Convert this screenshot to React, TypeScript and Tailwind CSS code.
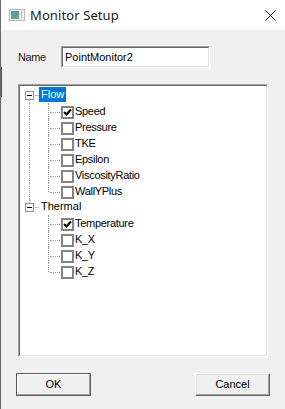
import React from "react";

type Item = { label: string; checked?: boolean };
const groups: { name: string; selected?: boolean; items: Item[] }[] = [
  {
    name: "Flow",
    selected: true,
    items: [
      { label: "Speed", checked: true },
      { label: "Pressure" },
      { label: "TKE" },
      { label: "Epsilon" },
      { label: "ViscosityRatio" },
      { label: "WallYPlus" },
    ],
  },
  {
    name: "Thermal",
    items: [
      { label: "Temperature", checked: true },
      { label: "K_X" },
      { label: "K_Y" },
      { label: "K_Z" },
    ],
  },
];

function CheckBox({ checked }: { checked?: boolean }) {
  return (
    <div className="absolute left-[41px] top-[3px] w-[13px] h-[13px] border-2 border-[#838383] bg-white flex items-center justify-center">
      {checked && (
        <svg width="9" height="9" viewBox="0 0 9 9">
          <path d="M1 4 L3.5 6.5 L8 1.5" stroke="#000" strokeWidth="2" fill="none" />
        </svg>
      )}
    </div>
  );
}

function TitleIcon() {
  return (
    <svg width="16" height="12" viewBox="0 0 16 12">
      <defs>
        <linearGradient id="g" x1="0" y1="0" x2="0" y2="1">
          <stop offset="0" stopColor="#5a8fb8" />
          <stop offset="1" stopColor="#5fae80" />
        </linearGradient>
      </defs>
      <rect x="0.5" y="0.5" width="15" height="11" fill="#f4f4f4" stroke="#b9b9b9" />
      <rect x="2" y="2" width="8" height="8" fill="url(#g)" />
      <rect x="10" y="2" width="4" height="8" fill="#e9e9e9" />
      <rect x="12" y="2" width="1" height="8" fill="#c4c4c4" />
    </svg>
  );
}

export default function App() {
  return (
    <div className="relative w-[285px] h-[409px] bg-[#f0f0f0] border-l border-[#6b6b6b] flex flex-col overflow-hidden font-['Liberation_Sans',Arial,sans-serif] text-[11px] text-black">
      <div className="absolute left-[-1px] top-[67px] w-[2px] h-[30px] bg-[#7d2f7f]" />
      {/* Title bar */}
      <div className="h-[30px] bg-white flex items-center pl-[8px] pr-[9px]">
        <TitleIcon />
        <span className="ml-[5px] text-[13px] text-[#1a1a1a] font-['Noto_Sans','Liberation_Sans',sans-serif] leading-none tracking-[0.1px]">
          Monitor Setup
        </span>
        <div className="flex-1" />
        <svg width="11" height="11" viewBox="0 0 11 11">
          <path d="M0.5 0.5 L10.5 10.5 M10.5 0.5 L0.5 10.5" stroke="#000" strokeWidth="1" />
        </svg>
      </div>

      {/* Name row */}
      <div className="mt-[16px] flex items-center pl-[17px]">
        <span className="w-[43px] text-[#1a1a1a] tracking-[-0.4px]">Name</span>
        <div className="w-[149px] h-[22px] border-t border-l border-[#a0a0a0] border-r-white border-b-white border-r border-b">
          <div className="w-full h-full border-t border-l border-t-[#696969] border-l-[#696969] border-r border-b border-r-[#e3e3e3] border-b-[#e3e3e3] bg-white pl-[2px] leading-[18px]">
            PointMonitor2
          </div>
        </div>
      </div>

      {/* Tree */}
      <div className="mt-[16px] ml-[17px] w-[250px] h-[273px] border-t border-l border-t-[#a0a0a0] border-l-[#a0a0a0] border-r border-b border-r-white border-b-white">
        <div className="w-full h-full bg-white border-t border-l border-t-[#696969] border-l-[#696969] border-r border-b border-r-[#e3e3e3] border-b-[#e3e3e3] pt-[1px]">
          {groups.map((g, gi) => {
            const lastGroup = gi === groups.length - 1;
            return (
              <div key={g.name}>
                <div className="relative h-[16px]">
                  {gi > 0 && (
                    <div className="absolute left-[9px] top-0 h-[4px] border-l border-dotted border-[#a0a0a0]" />
                  )}
                  {!lastGroup && (
                    <div className="absolute left-[9px] top-[13px] h-[3px] border-l border-dotted border-[#a0a0a0]" />
                  )}
                  <div className="absolute left-[5px] top-[4px] w-[9px] h-[9px] border border-[#919191] bg-white flex items-center justify-center">
                    <div className="w-[5px] h-[1px] bg-black" />
                  </div>
                  <div className="absolute left-[15px] top-[8px] w-[4px] border-t border-dotted border-[#a0a0a0]" />
                  <div
                    className={
                      "absolute left-[19px] top-0 h-[15px] px-[2px] leading-[15px] " +
                      (g.selected ? "bg-[#0078d7] text-white" : "text-black")
                    }
                  >
                    {g.name}
                  </div>
                </div>
                {g.items.map((it, ii) => {
                  const last = ii === g.items.length - 1;
                  return (
                    <div key={it.label} className="relative h-[16px]">
                      {!lastGroup && (
                        <div className="absolute left-[9px] top-0 h-[16px] border-l border-dotted border-[#a0a0a0]" />
                      )}
                      <div
                        className={
                          "absolute left-[28px] top-0 border-l border-dotted border-[#a0a0a0] " +
                          (last ? "h-[9px]" : "h-[16px]")
                        }
                      />
                      <div className="absolute left-[30px] top-[9px] w-[10px] border-t border-dotted border-[#a0a0a0]" />
                      <CheckBox checked={it.checked} />
                      <div className="absolute left-[55px] top-[1px] leading-[15px] tracking-[-0.3px]">{it.label}</div>
                    </div>
                  );
                })}
              </div>
            );
          })}
        </div>
      </div>

      {/* Buttons */}
      <div className="mt-[16px] flex justify-between pl-[15px] pr-[15px]">
        <div className="w-[75px] h-[23px] border border-[#5a5a5a]">
          <div className="w-full h-full border-t border-l border-white border-r border-b border-r-[#a0a0a0] border-b-[#a0a0a0] bg-[#f0f0f0] flex items-center justify-center leading-none">
            OK
          </div>
        </div>
        <div className="w-[75px] h-[23px] border-t border-l border-white border-r border-b border-r-[#696969] border-b-[#696969]">
          <div className="w-full h-full border-t border-l border-t-[#e3e3e3] border-l-[#e3e3e3] border-r border-b border-r-[#a0a0a0] border-b-[#a0a0a0] bg-[#f0f0f0] flex items-center justify-center leading-none">
            Cancel
          </div>
        </div>
      </div>
    </div>
  );
}
